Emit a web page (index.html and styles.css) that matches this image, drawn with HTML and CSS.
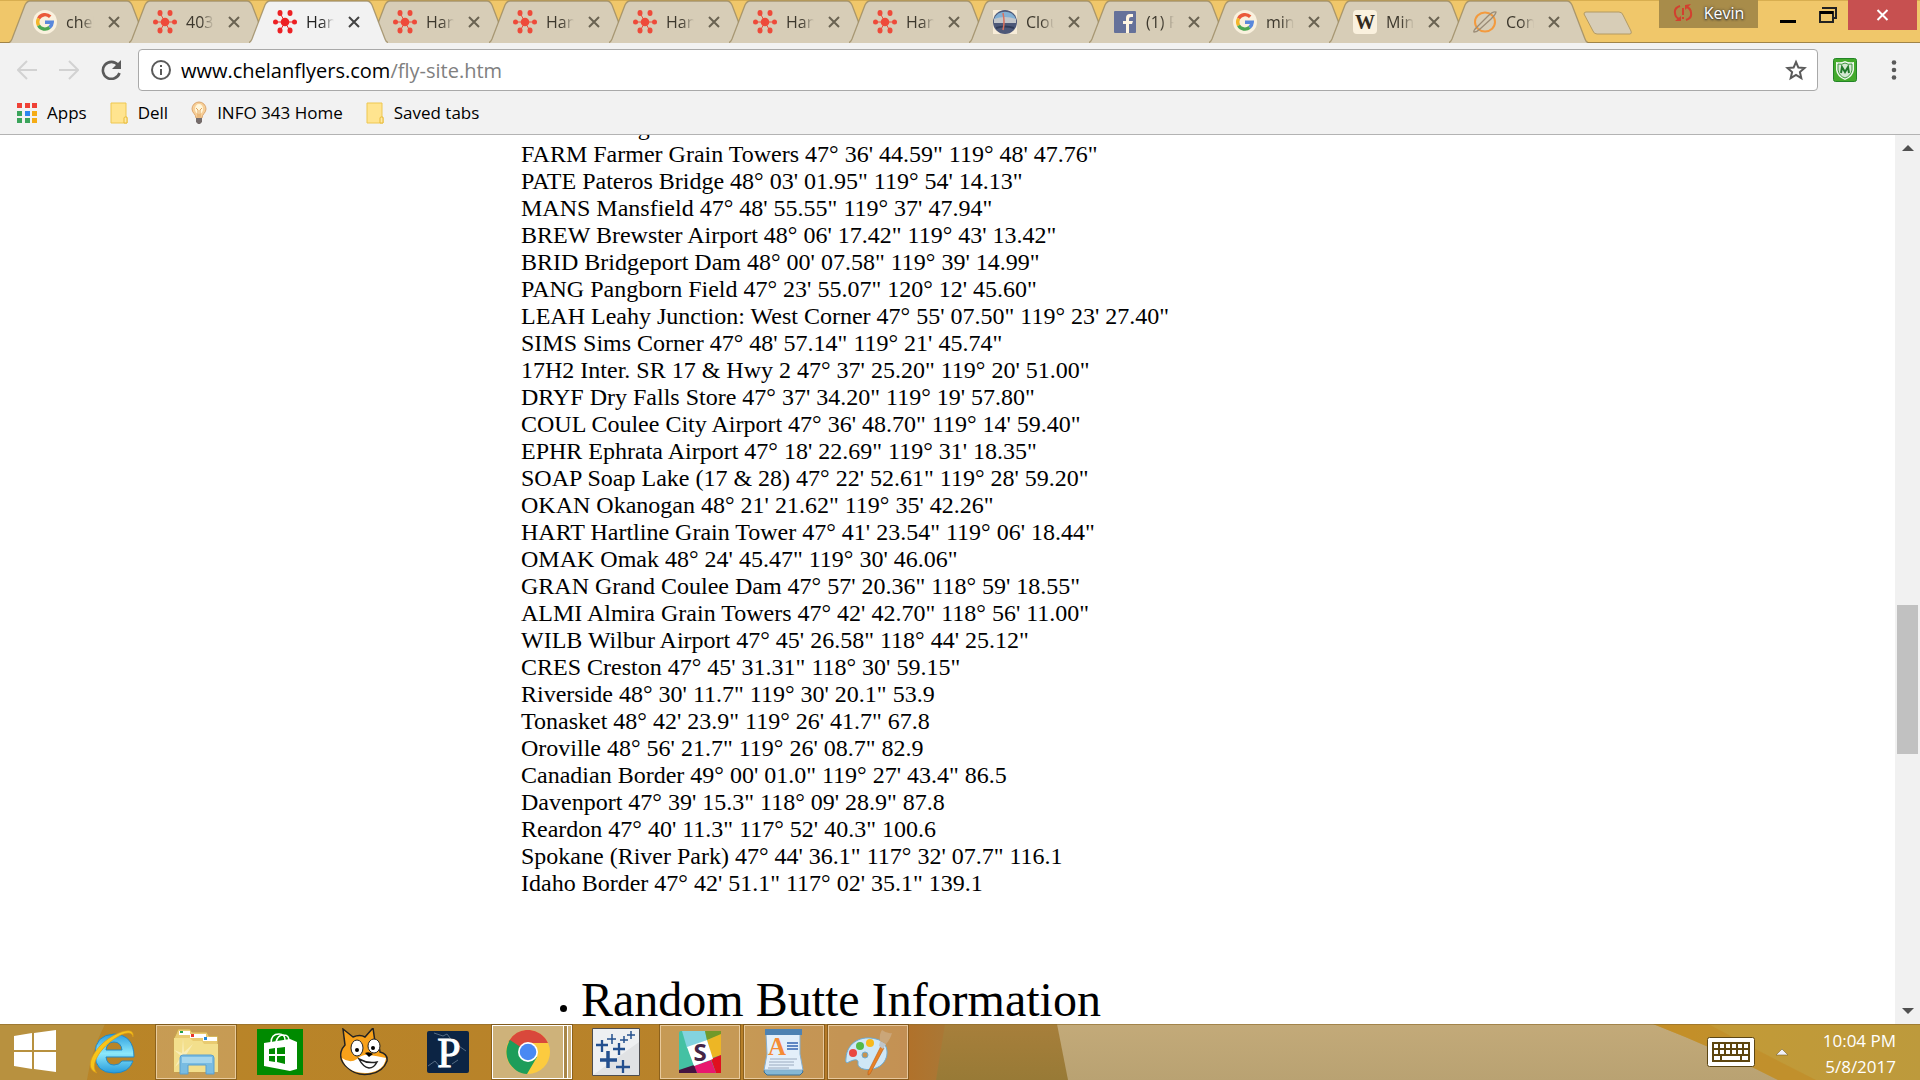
FILE: index.html
```html
<!DOCTYPE html>
<html lang="en">
<head>
<meta charset="utf-8">
<title>Hang gliding fly site</title>
<link rel="stylesheet" href="styles.css">
</head>
<body>
<svg class="defs" aria-hidden="true">
  <symbol id="google" viewBox="0 0 24 24"><circle cx="12" cy="12" r="12" fill="#faf1de"/><g fill="none" stroke-width="3.4"><path d="M17.2 6.8A7.3 7.3 0 0 0 5.6 8.5" stroke="#ea5a3a"/><path d="M5.6 8.5a7.3 7.3 0 0 0 0 7" stroke="#f3b52a"/><path d="M5.6 15.5a7.3 7.3 0 0 0 11 1.9" stroke="#4aa853"/><path d="M16.6 17.4a7.3 7.3 0 0 0 2.6-5.1H12" stroke="#5a88dc"/></g></symbol>
  <symbol id="hub" viewBox="0 0 24 24"><g fill="currentColor"><circle cx="12" cy="12" r="4.3"/><ellipse cx="7" cy="3" rx="2.5" ry="3"/><ellipse cx="17" cy="3" rx="2.5" ry="3"/><circle cx="2.5" cy="12" r="2.5"/><circle cx="21.5" cy="12" r="2.5"/><ellipse cx="7" cy="20.500" rx="2.500" ry="3"/><ellipse cx="17" cy="20.500" rx="2.500" ry="3"/></g><path d="M7 3l5 9M2 12h19M7 21l5-9 5 9" fill="none" stroke="currentColor" stroke-width="1"/></symbol>
  <symbol id="cross" viewBox="0 0 12 12"><path d="M1 1l10 10M11 1L1 11" stroke="currentColor" stroke-width="2"/></symbol>
  <symbol id="tab" viewBox="0 0 139 43" preserveAspectRatio="none"><path d="M0 43C2 42 2 41 3 39L16 5q2-4 5-4h97q3 0 5 4l13 34q1 3 3 4z" fill="currentColor"/><path d="M0 42.500C2 42 2 41 3 39L16 5q2-4 5-4h97q3 0 5 4l13 34q1 3 3 3.500" fill="none" stroke="#9b8a62" stroke-opacity=".8" stroke-width="1.300"/></symbol>
  <symbol id="folder" viewBox="0 0 18 22"><path d="M1 1h15v14h1v6H1z" fill="#ffe48f" stroke="#eec750"/><path d="M14 21v-5q0-1 1.500-1t1.500 1v5z" fill="#ffe9a5" stroke="#e8bb38"/></symbol>
</svg>
<div class="screen">
  <header class="titlebar">
    <nav class="tabs" aria-label="Tabs">
      <div class="tab"><svg class="shape"><use href="#tab"/></svg><svg class="fav"><use href="#google"/></svg><a href="#" class="name">chelan</a><button class="x" aria-label="Close tab"><svg><use href="#cross"/></svg></button></div>
      <div class="tab"><svg class="shape"><use href="#tab"/></svg><svg class="fav"><use href="#hub"/></svg><a href="#" class="name">403 F</a><button class="x" aria-label="Close tab"><svg><use href="#cross"/></svg></button></div>
      <div class="tab active"><svg class="shape"><use href="#tab"/></svg><svg class="fav"><use href="#hub"/></svg><a href="#" class="name">Hang</a><button class="x" aria-label="Close tab"><svg><use href="#cross"/></svg></button></div>
      <div class="tab"><svg class="shape"><use href="#tab"/></svg><svg class="fav"><use href="#hub"/></svg><a href="#" class="name">Hang</a><button class="x" aria-label="Close tab"><svg><use href="#cross"/></svg></button></div>
      <div class="tab"><svg class="shape"><use href="#tab"/></svg><svg class="fav"><use href="#hub"/></svg><a href="#" class="name">Hang</a><button class="x" aria-label="Close tab"><svg><use href="#cross"/></svg></button></div>
      <div class="tab"><svg class="shape"><use href="#tab"/></svg><svg class="fav"><use href="#hub"/></svg><a href="#" class="name">Hang</a><button class="x" aria-label="Close tab"><svg><use href="#cross"/></svg></button></div>
      <div class="tab"><svg class="shape"><use href="#tab"/></svg><svg class="fav"><use href="#hub"/></svg><a href="#" class="name">Hang</a><button class="x" aria-label="Close tab"><svg><use href="#cross"/></svg></button></div>
      <div class="tab"><svg class="shape"><use href="#tab"/></svg><svg class="fav"><use href="#hub"/></svg><a href="#" class="name">Hang</a><button class="x" aria-label="Close tab"><svg><use href="#cross"/></svg></button></div>
      <div class="tab"><svg class="shape"><use href="#tab"/></svg><svg class="fav" viewBox="0 0 24 24"><path d="M0 0h24v24H0z" fill="#f7ecd8"/><circle cx="12" cy="12" r="12" fill="#4d5878"/><path d="M1 9a12 12 0 0 1 22 0v3H1z" fill="#83b0d4"/><path d="M1 9q11-4 22 0v4H1z" fill="#c3c6ca"/><path d="M3 18q9-3 18 0" stroke="#303b59" stroke-width="2" fill="none"/><path d="M10 3q2 9 0 17" stroke="#d9705c" stroke-width="1.500" fill="none"/></svg><a href="#" class="name">Cloud</a><button class="x" aria-label="Close tab"><svg><use href="#cross"/></svg></button></div>
      <div class="tab"><svg class="shape"><use href="#tab"/></svg><svg class="fav" viewBox="0 0 24 24"><rect x="1" y="1" width="22" height="22" rx="1" fill="#65719a"/><path d="M13 23v-9h-3v-3h3V8q0-4 4-4h3v3h-2q-2 0-2 2v2h4l-1 3h-3v9z" fill="#fff5e2"/></svg><a href="#" class="name">(1) Fa</a><button class="x" aria-label="Close tab"><svg><use href="#cross"/></svg></button></div>
      <div class="tab"><svg class="shape"><use href="#tab"/></svg><svg class="fav"><use href="#google"/></svg><a href="#" class="name">mini</a><button class="x" aria-label="Close tab"><svg><use href="#cross"/></svg></button></div>
      <div class="tab"><svg class="shape"><use href="#tab"/></svg><svg class="fav" viewBox="0 0 24 24"><rect width="24" height="24" rx="4" fill="#faf1de"/><text x="12" y="19" class="wiki">W</text></svg><a href="#" class="name">Mini</a><button class="x" aria-label="Close tab"><svg><use href="#cross"/></svg></button></div>
      <div class="tab"><svg class="shape"><use href="#tab"/></svg><svg class="fav" viewBox="0 0 24 24"><ellipse cx="12" cy="12" rx="10" ry="9.500" fill="none" stroke="#f39a3e" stroke-width="2"/><path d="M23 2q-3-1-8 4L4 17q-4 4-3 5 3 0 6-3L18 9q5-5 5-7z" fill="none" stroke="#9a8b76" stroke-width="1.300"/></svg><a href="#" class="name">Cont</a><button class="x" aria-label="Close tab"><svg><use href="#cross"/></svg></button></div>
    </nav>
    <button class="newtab" aria-label="New tab"><svg viewBox="0 0 50 24"><path d="M3 1h33q3 0 4 3l8 16q1 3-1 3H14q-3 0-4-3L1 3Q1 1 3 1z" fill="#d7cdb7" stroke="#b39a62"/></svg></button>
    <div class="winctl">
      <button class="user"><svg viewBox="0 0 20 18"><g fill="none" stroke="#d2402f" stroke-width="2"><path d="M7 2Q1 4 2 9q0 4 4 6M13 16q6-2 5-7 0-4-4-6M10 4v7"/></g><path d="M2 17l6-5v5zM18 0l-6 6V1zM9 13h2v2H9z" fill="#d2402f"/></svg>Kevin</button>
      <button class="min" aria-label="Minimize"><svg viewBox="0 0 16 3"><path d="M0 0h16v3H0z"/></svg></button>
      <button class="max" aria-label="Restore"><svg viewBox="0 0 18 16"><path d="M4 2V1h13v10h-2M1 5h13v10H1z" fill="none" stroke="#222" stroke-width="2"/><path d="M1 4h13v3H1z"/></svg></button>
      <button class="close" aria-label="Close window"><svg><use href="#cross"/></svg></button>
    </div>
  </header>
  <div class="toolbar">
    <button class="back" aria-label="Back"><svg viewBox="0 0 20 20"><path d="M20 10H2M10 1l-9 9 9 9" fill="none" stroke="#d2d2d2" stroke-width="2"/></svg></button>
    <button class="fwd" aria-label="Forward"><svg viewBox="0 0 20 20"><path d="M0 10h18M10 1l9 9-9 9" fill="none" stroke="#d2d2d2" stroke-width="2"/></svg></button>
    <button class="reload" aria-label="Reload"><svg viewBox="0 0 20 20"><path d="M17 5a8.500 8.500 0 1 0 1.500 8" fill="none" stroke="#5a5a5a" stroke-width="2.600"/><path d="M20 0v9h-9z" fill="#5a5a5a"/></svg></button>
    <div class="omnibox">
      <svg class="info" viewBox="0 0 20 20"><circle cx="10" cy="10" r="9" fill="none" stroke="#5a5a5a" stroke-width="2"/><path d="M9 9h2v6H9zM9 5h2v2H9z" fill="#5a5a5a"/></svg>
      <a class="url" href="#">www.chelanflyers.com<span>/fly-site.htm</span></a>
      <button class="star" aria-label="Bookmark this page"><svg viewBox="0 0 22 22"><path d="M11 3l2.400 5.600 6.100.500-4.600 4 1.400 6L11 16l-5.300 3.100 1.400-6-4.600-4 6.100-.5z" fill="none" stroke="#5a5a5a" stroke-width="2"/></svg></button>
    </div>
    <button class="shield" aria-label="Site advisor"><svg viewBox="0 0 24 24"><rect x=".5" y=".5" width="23" height="23" rx="2" fill="#43aa2c" stroke="#238527"/><path d="M12 3q4 2 9 1v8q-1 7-9 10-8-3-9-10V4q5 1 9-1z" fill="#f0f7ee"/><path d="M12 5q3 2 7 1v6q-1 6-7 8-6-2-7-8V6q4 1 7-1z" fill="#d5e8d2" stroke="#3b963a"/><path d="M8 15l1-6 3 5 3-5 1 6" fill="none" stroke="#227a2a" stroke-width="2"/></svg></button>
    <button class="menu" aria-label="Menu"><svg viewBox="0 0 6 20"><g fill="#5a5a5a"><circle cx="3" cy="2.500" r="2.300"/><circle cx="3" cy="10" r="2.300"/><circle cx="3" cy="17.500" r="2.300"/></g></svg></button>
  </div>
  <nav class="bookmarks" aria-label="Bookmarks">
    <a href="#"><svg class="i20" viewBox="0 0 20 20"><path d="M0 0h5v5H0zM8 0h5v5H8zM15 0h5v5h-5z" fill="#ef4136"/><path d="M0 8h5v5H0zM0 15h5v5H0zM8 15h5v5H8z" fill="#3ba45b"/><path d="M8 8h5v5H8z" fill="#2c86ee"/><path d="M15 8h5v5h-5zM15 15h5v5h-5z" fill="#f5ac16"/></svg>Apps</a>
    <a href="#"><svg class="i18"><use href="#folder"/></svg>Dell</a>
    <a href="#"><svg class="i16" viewBox="0 0 16 24"><path d="M8 1a7 7 0 0 0-7 7c0 4 4 5 4 9h6c0-4 4-5 4-9a7 7 0 0 0-7-7z" fill="#f7cf98" stroke="#dca66d"/><ellipse cx="8" cy="8" rx="4" ry="5" fill="#fff7dc"/><path d="M7 16V9L5 7m4 9V9l2-2" stroke="#e0a35f" fill="none"/><path d="M5 17h6v4l-2 2H7l-2-2z" fill="#756c6b"/></svg>INFO 343 Home</a>
    <a href="#"><svg class="i18"><use href="#folder"/></svg>Saved tabs</a>
  </nav>
  <div class="viewport">
    <main class="page">
      <div class="points">DOUG Douglas<br>
FARM Farmer Grain Towers 47° 36' 44.59" 119° 48' 47.76"<br>
PATE Pateros Bridge 48° 03' 01.95" 119° 54' 14.13"<br>
MANS Mansfield 47° 48' 55.55" 119° 37' 47.94"<br>
BREW Brewster Airport 48° 06' 17.42" 119° 43' 13.42"<br>
BRID Bridgeport Dam 48° 00' 07.58" 119° 39' 14.99"<br>
PANG Pangborn Field 47° 23' 55.07" 120° 12' 45.60"<br>
LEAH Leahy Junction: West Corner 47° 55' 07.50" 119° 23' 27.40"<br>
SIMS Sims Corner 47° 48' 57.14" 119° 21' 45.74"<br>
17H2 Inter. SR 17 &amp; Hwy 2 47° 37' 25.20" 119° 20' 51.00"<br>
DRYF Dry Falls Store 47° 37' 34.20" 119° 19' 57.80"<br>
COUL Coulee City Airport 47° 36' 48.70" 119° 14' 59.40"<br>
EPHR Ephrata Airport 47° 18' 22.69" 119° 31' 18.35"<br>
SOAP Soap Lake (17 &amp; 28) 47° 22' 52.61" 119° 28' 59.20"<br>
OKAN Okanogan 48° 21' 21.62" 119° 35' 42.26"<br>
HART Hartline Grain Tower 47° 41' 23.54" 119° 06' 18.44"<br>
OMAK Omak 48° 24' 45.47" 119° 30' 46.06"<br>
GRAN Grand Coulee Dam 47° 57' 20.36" 118° 59' 18.55"<br>
ALMI Almira Grain Towers 47° 42' 42.70" 118° 56' 11.00"<br>
WILB Wilbur Airport 47° 45' 26.58" 118° 44' 25.12"<br>
CRES Creston 47° 45' 31.31" 118° 30' 59.15"<br>
Riverside 48° 30' 11.7" 119° 30' 20.1" 53.9<br>
Tonasket 48° 42' 23.9" 119° 26' 41.7" 67.8<br>
Oroville 48° 56' 21.7" 119° 26' 08.7" 82.9<br>
Canadian Border 49° 00' 01.0" 119° 27' 43.4" 86.5<br>
Davenport 47° 39' 15.3" 118° 09' 28.9" 87.8<br>
Reardon 47° 40' 11.3" 117° 52' 40.3" 100.6<br>
Spokane (River Park) 47° 44' 36.1" 117° 32' 07.7" 116.1<br>
Idaho Border 47° 42' 51.1" 117° 02' 35.1" 139.1</div>
      <ul><li><h1>Random Butte Information</h1></li></ul>
    </main>
    <div class="scroll" aria-hidden="true">
      <svg class="arrow" viewBox="0 0 12 6"><path d="M0 6l6-6 6 6z"/></svg>
      <div class="track"><div class="thumb"></div></div>
      <svg class="arrow" viewBox="0 0 12 6"><path d="M0 0l6 6 6-6z"/></svg>
    </div>
  </div>
  <footer class="taskbar">
    <svg class="wall" viewBox="0 0 1920 56" preserveAspectRatio="none" aria-hidden="true">
      <defs>
        <linearGradient id="g1"><stop offset="0" stop-color="#b98527"/><stop offset=".75" stop-color="#b8822a"/><stop offset="1" stop-color="#b27028"/></linearGradient>
        <linearGradient id="g2" x2="0" y2="1"><stop offset="0" stop-color="#c3aa79"/><stop offset="1" stop-color="#b9a272"/></linearGradient>
        <linearGradient id="g3"><stop offset="0" stop-color="#c8942a"/><stop offset=".3" stop-color="#c29a37"/><stop offset="1" stop-color="#bd9a3c"/></linearGradient>
        <linearGradient id="g4" x2="0" y2="1"><stop offset="0" stop-color="#a77f3b"/><stop offset="1" stop-color="#987a36"/></linearGradient>
        <linearGradient id="g5"><stop offset="0" stop-color="#b27028"/><stop offset="1" stop-color="#a77a3a"/></linearGradient>
      </defs>
      <path d="M0 0h960v56H0z" fill="url(#g1)"/>
      <path d="M0 0h105q-14 28-18 56H0z" fill="#b8913f"/>
      <path d="M900 0h60v56h-60z" fill="url(#g5)"/>
      <path d="M945 0h140v56H936z" fill="url(#g4)"/>
      <path d="M1057 0h863v56h-852z" fill="url(#g2)"/>
      <path d="M1653 0h267v56h-142q-58-30-125-56z" fill="url(#g3)"/>
      <path d="M1653 0h55q52 28 108 56h-38q-58-30-125-56z" fill="#c18b24" opacity=".6"/>
      <path d="M0 .5h1920" stroke="#8c6a2c" stroke-opacity=".6"/>
    </svg>
    <button class="start" aria-label="Start"><svg viewBox="0 0 44 44"><path d="M1 6l18-3v17H1zM21 3l22-3v20H21zM1 22h18v17L1 36zM21 22h22v20l-22-3z" fill="#fff"/></svg></button>
    <button class="task ie" aria-label="Internet Explorer"><svg viewBox="0 0 48 48"><defs><linearGradient id="eg" x2="0" y2="1"><stop offset="0" stop-color="#2b9ee0"/><stop offset=".5" stop-color="#8ce8fa"/><stop offset="1" stop-color="#279bdc"/></linearGradient></defs><path d="M46 29H18q1 8 8 8 5 0 8-4h11q-4 12-19 12Q7 45 7 26 7 7 26 6q20 1 20 23zM18 22h16q-1-8-8-8t-8 8z" fill="url(#eg)" stroke="#2289c7"/><path d="M9 45C-6 40 7 20 20 11 33 2 47-1 45 9c-1-8-13-3-23 5C10 24 2 38 9 45z" fill="#f8c51a" stroke="#d99818" stroke-width=".7"/></svg></button>
    <button class="task open" aria-label="File Explorer"><svg viewBox="0 0 48 48"><path d="M4 6l2-5h12l2 3h15l2 4h9v36H2V10z" fill="#e9cb70" stroke="#c4a04c"/><path d="M7 3h11v4H7zM18 6h16v4H18zM31 9h14v4H31z" fill="#fff"/><path d="M8 3h3v2H8z" fill="#22a04a"/><path d="M19 6h3v3h-3z" fill="#e8372c"/><path d="M32 9h3v3h-3z" fill="#2388d8"/><path d="M2 10h16l3 3h9l2 3h14v28H2z" fill="#f3df8c"/><path d="M11 10l1 14 9-8-7 11 8 2-10 2-9 8 6-11-7-6 8 3z" fill="#fffbe0" opacity=".5"/><path d="M8 46V30q0-3 3-3h28q3 0 3 3v16h-8v-9H16v9z" fill="#79bce2" stroke="#5a9fce"/><path d="M10 32h30" stroke="#a5d6ee" stroke-width="6"/></svg></button>
    <button class="task" aria-label="Store"><svg viewBox="0 0 48 48"><path d="M1 1h46v46H1z" fill="#008a00"/><path d="M8 15l26-4 7 3v27l-7 2-26-5z" fill="#fff"/><path d="M15 15q0-9 8-9 6 0 6 6M20 14q2-8 8-7 5 0 5 6" stroke="#fff" fill="none" stroke-width="1.500"/><path d="M13 21l6-1v6h-6zM21 20l8-1v7h-8zM13 28h6v6l-6-1zM21 28h8v8l-8-2z" fill="#008a00"/></svg></button>
    <button class="task" aria-label="Scratch"><svg viewBox="0 0 48 48"><path d="M3 1l10 8q7-3 12 0l8-9 2 14q5 5 5 10 8 2 7 9-4 11-17 13-14 2-22-6-9-7-7-16 1-4 4-7z" fill="#f7a11a" stroke="#222" stroke-width="1.500"/><path d="M2 30q8 6 15 1 6-5 12-4 8 1 17 3-2 13-18 15Q7 46 2 30z" fill="#fff"/><g fill="#fff" stroke="#222"><ellipse cx="17" cy="20" rx="6" ry="8"/><ellipse cx="34" cy="18" rx="6" ry="7"/></g><circle cx="17" cy="22" r="2"/><circle cx="33" cy="20" r="2"/><path d="M25 25q4-2 8 1l-4 3z"/><path d="M19 31q9 5 18 3-3 6-8 6-6-1-10-9z" fill="#fff" stroke="#222" stroke-width="1.500"/></svg></button>
    <button class="task" aria-label="Processing"><svg viewBox="0 0 48 48"><rect x="3" y="3" width="42" height="42" rx="2" fill="#0c2444"/><path d="M10 5l9 3 4-2 6 8 13 9M4 38l7-5 6 7M28 36l6-4" stroke="#566c84" fill="none"/><text x="25" y="39" class="proc">P</text></svg></button>
    <button class="task open chrome" aria-label="Chrome"><span class="stack"><svg viewBox="0 0 44 44"><circle cx="22" cy="22" r="22" fill="#fccb3f"/><path d="M22 22L2.500 11.500A22 22 0 0 1 42 13H22z" fill="#d9483b"/><path d="M22 22L4 10a22 22 0 0 0 17 34l10-17z" fill="#1d9d5a"/><circle cx="22" cy="22" r="10" fill="#fff"/><circle cx="22" cy="22" r="8.300" fill="#4989f3"/></svg></span></button>
    <button class="task" aria-label="Tableau"><svg viewBox="0 0 48 48"><path d="M.5.5h47v47H.5z" fill="#eef0f2" stroke="#4e4e50"/><path d="M47 14v33H1z" fill="#d7d9db" opacity=".6"/><g stroke="#24508f" fill="none"><path d="M20 6v10M15 11h9M32 8v7M28 12h8M39 3v8M35 7h8" stroke-width="1.500"/><path d="M10 12v12M4 17h12M27 15v12M21 21h12M31 32v13M24 39h14" stroke-width="2.300"/><path d="M16 23v17M8 32h17" stroke-width="3.500"/></g></svg></button>
    <button class="task open" aria-label="Slack"><svg viewBox="0 0 48 48"><rect x="3" y="3" width="42" height="42" rx="2" fill="#44c1a3"/><path d="M6 3h23l2 9-20 8z" fill="#83d3df"/><path d="M29 3h16v4l-14 5z" fill="#72992a"/><path d="M31 12l14-6v21l-9 3z" fill="#edb625"/><path d="M45 27v18h-5l-5-14z" fill="#e01020"/><path d="M18 38l17-6 5 13H21z" fill="#e8186f"/><path d="M3 42l15-5 3 8H3z" fill="#451440"/><path d="M11 19l20-7 6 19-19 7z" fill="#fff"/><text x="24" y="33" class="slack">S</text></svg></button>
    <button class="task open" aria-label="WordPad"><svg viewBox="0 0 48 48"><path d="M6 36L4 44l3 3h33l3-3-3-9z" fill="#85b8d5" stroke="#3d7093"/><path d="M6 6h34v20l3 16H4L7 26z" fill="#e3effa" stroke="#86aecd"/><path d="M5 1h37v6H5z" fill="#4e82b2"/><text x="17" y="27" class="pad">A</text><path d="M27 15h11M27 18h11M27 21h11" stroke="#3565b3" stroke-width="1.500"/><path d="M10 31h27M9 34h25M9 37h25M8 40h21" stroke="#9aaabf"/></svg></button>
    <button class="task open" aria-label="Paint"><svg viewBox="0 0 48 48"><path d="M2 30C3 14 18 7 32 11c14 3 14 20 4 27-9 6-23 4-22-3 1-6-8-2-11 0q-2-1-1-5zm16-3a3 3 0 1 0 6 0 3 3 0 0 0-6 0z" fill="#cfe7f6" stroke="#6eabd1"/><circle cx="9" cy="25" r="4" fill="#e94740"/><circle cx="16" cy="18" r="4" fill="#53b946"/><circle cx="26" cy="15" r="4" fill="#f8b91c"/><path d="M37 18l3 2-14 26-2 1v-3z" fill="#e98226" stroke="#b85d16" stroke-width=".6"/><path d="M36 13l6 3-3 5-4-3z" fill="#bfc5ca"/><path d="M36 13q-1-7 2-11 5 4 10 3-2 7-6 11z" fill="#caa679"/></svg></button>
    <div class="tray">
      <button class="kbd" aria-label="Touch keyboard"><svg viewBox="0 0 48 30"><rect x=".5" y=".5" width="47" height="29" rx="2" fill="#fff" stroke="#5c4613"/><path d="M5 5h38v20H5z" fill="#5e460f"/><path d="M7 9h34M7 15h34" stroke="#fff" stroke-width="4" stroke-dasharray="4 2"/><path d="M7 21h6m2 0h18m2 0h6" stroke="#fff" stroke-width="4"/></svg></button>
      <button class="up" aria-label="Show hidden icons"><svg viewBox="0 0 12 8"><path d="M0 7l6-6 6 6z" fill="#f0f0fa" stroke="#7d642a" stroke-width=".6"/></svg></button>
      <div class="clock">10:04 PM<br>5/8/2017</div>
    </div>
  </footer>
</div>
</body>
</html>
```
FILE: styles.css
```css
* { box-sizing: border-box; }
body { margin: 0; font-family: "Open Sans", "Noto Sans", sans-serif; font-size: 17px; color: #000; }
button { border: 0; padding: 0; margin: 0; background: none; font: inherit; color: inherit; display: flex; align-items: center; justify-content: center; flex: none; }
a { color: inherit; text-decoration: none; }
svg { display: block; flex: none; }
.defs { display: none; }
.screen { height: 100vh; display: flex; flex-direction: column; overflow: hidden; background: #fff; }

.titlebar { display: flex; height: 43px; flex: none; background: #f0c76a; border-top: 1px solid #d8ae50; padding-left: 9px; box-shadow: inset 0 -1px #a08448; }
.tabs { display: flex; padding-right: 19px; }
.tab { position: relative; width: 120px; height: 41px; display: flex; align-items: center; padding-left: 24px; color: #d7cdb7; }
.tab .shape { position: absolute; left: 0; top: -1px; width: 139px; height: 43px; }
.tab .fav { position: relative; width: 24px; height: 24px; color: #ee4a3a; }
.tab .name { position: relative; width: 28px; margin-left: 9px; font-size: 16px; overflow: hidden; white-space: nowrap; color: #3d382d; -webkit-mask-image: linear-gradient(90deg, #000 55%, transparent); mask-image: linear-gradient(90deg, #000 55%, transparent); }
.tab .x { position: relative; width: 12px; margin-left: 14px; color: #6a6352; }
.tab .x svg { width: 12px; height: 12px; }
.tab.active { color: #f2f2f2; z-index: 1; }
.tab.active .fav { color: #ed2024; }
.tab.active .name { color: #222; }
.tab.active .x { color: #444; }
.wiki { font: bold 20px "Liberation Serif", serif; text-anchor: middle; fill: #332b20; }
.newtab { width: 50px; height: 24px; margin: 10px 0 0 -5px; }
.newtab svg { width: 50px; height: 24px; }
.winctl { display: flex; margin-left: auto; padding-right: 3px; margin-top: -1px; }
.user { width: 99px; height: 28px; gap: 11px; background: #a88c4a; color: #fff; font-size: 16px; line-height: 20px; padding-bottom: 2px; text-shadow: 0 0 3px #333, 0 1px 2px #333; }
.user svg { width: 20px; height: 18px; }
.min { width: 60px; height: 42px; }
.min svg { width: 16px; height: 3px; }
.max { width: 30px; height: 30px; padding-right: 10px; }
.max svg { width: 18px; height: 16px; }
.close { width: 69px; height: 30px; background: #c75050; color: #fff; }
.close svg { width: 13px; height: 12px; }

.toolbar { display: flex; align-items: center; height: 54px; flex: none; background: #f2f2f2; padding: 0 20px 0 17px; }
.toolbar svg { width: 20px; height: 20px; }
.fwd { margin-left: 22px; }
.reload { margin-left: 22px; }
.omnibox { flex: 1; display: flex; align-items: center; height: 42px; margin-left: 17px; padding: 0 10px 0 12px; background: #fff; border: 1px solid #a9a9a9; border-radius: 4px; }
.url { flex: 1; margin-left: 10px; font-size: 20px; }
.url span { color: #808080; }
.omnibox .star svg { width: 22px; height: 22px; }
.toolbar .shield { margin-left: 15px; }
.toolbar .shield svg { width: 24px; height: 24px; }
.menu { width: 20px; margin-left: 27px; margin-right: -4px; }
.toolbar .menu svg { width: 6px; }

.bookmarks { display: flex; height: 38px; flex: none; background: #f2f2f2; border-bottom: 1px solid #b3b3b3; padding: 0 17px; gap: 23px; }
.bookmarks a { display: flex; align-items: center; gap: 10px; height: 31px; }
.i20 { width: 20px; height: 20px; }
.i18 { width: 18px; height: 22px; }
.i16 { width: 16px; height: 24px; }

.viewport { flex: 1; min-height: 0; display: flex; overflow: hidden; }
.page { flex: 1; display: flex; flex-direction: column; justify-content: flex-end; padding-left: 521px; font: 24px/27px "Liberation Serif", serif; }
.page ul { margin: 79px 0 0; padding-left: 60px; }
.page h1 { margin: 0; font-size: 48px; line-height: 48px; font-weight: normal; }
.scroll { width: 25px; background: #f1f1f1; display: flex; flex-direction: column; align-items: center; padding: 10px 0; }
.arrow { width: 12px; height: 6px; fill: #505050; }
.track { flex: 1; align-self: stretch; padding: 0 2px; display: flex; flex-direction: column; }
.thumb { height: 149px; margin-top: 454px; background: #c1c1c1; }

.taskbar { position: relative; display: flex; height: 56px; flex: none; padding-left: 2px; }
.wall { position: absolute; inset: 0; width: 100%; height: 100%; }
.taskbar button, .tray { position: relative; }
.start { width: 66px; }
.start svg { width: 44px; height: 44px; }
.task { width: 80px; margin: 1px 0 1px 4px; }
.task svg { width: 48px; height: 48px; }
.task.open { background: rgba(220, 190, 150, .4); border: 1px solid rgba(255, 235, 205, .6); outline: 1px solid rgba(110, 75, 20, .6); outline-offset: 0; }
.task.chrome { background: #ceb27a; border: 1px solid #fff; justify-content: flex-start; }
.stack { align-self: stretch; width: 75px; display: flex; align-items: center; padding-left: 13px; border-right: 1px solid #fff; box-shadow: inset -3px 0 #a88648, inset -4px 0 #fff; }
.stack svg { width: 44px; height: 44px; }
.proc { font: 42px "Liberation Serif", serif; text-anchor: middle; fill: #fff; stroke: #fff; }
.slack { font: bold 24px "Open Sans", sans-serif; text-anchor: middle; fill: #452547; }
.pad { font: bold 25px "Liberation Serif", serif; text-anchor: middle; fill: #f58b36; }
.tray { margin-left: auto; display: flex; align-items: center; padding-right: 24px; }
.kbd svg { width: 48px; height: 30px; }
.up { margin-left: 21px; }
.up svg { width: 12px; height: 8px; }
.clock { width: 82px; margin-left: 26px; padding-top: 4px; color: #fff; line-height: 26px; text-align: right; white-space: nowrap; }
```
